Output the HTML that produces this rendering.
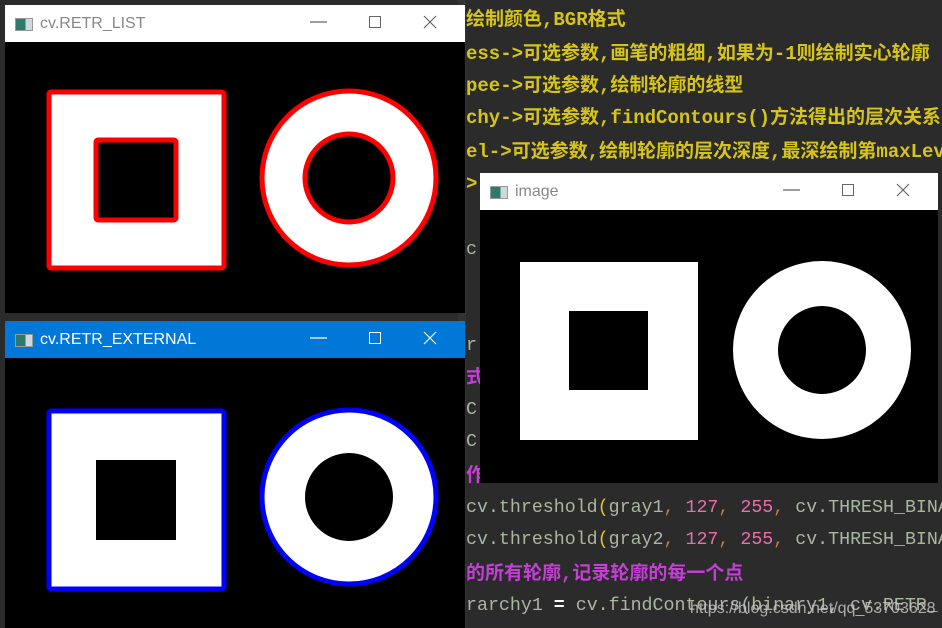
<!DOCTYPE html>
<html><head><meta charset="utf-8"><style>
*{margin:0;padding:0;box-sizing:border-box}
body{width:942px;height:628px;background:#2b2b2b;position:relative;overflow:hidden;font-family:"Liberation Mono","Noto Sans CJK SC",monospace}
.ln{position:absolute;left:466px;font-size:19px;line-height:20px;white-space:nowrap;font-weight:bold;color:#d6c41c}
.cd{position:absolute;left:466px;font-size:18.3px;line-height:20px;white-space:nowrap;color:#a9b7a0}
.win{position:absolute;background:#000;overflow:hidden}
.tb{position:absolute;left:0;right:0;top:0;height:37px;background:#fff;font-family:"Liberation Sans",sans-serif;font-size:16px;color:#888}
.tb .t{position:absolute;left:35px;top:10px}
.ic{position:absolute;left:10px;top:13px;width:18px;height:13px;background:linear-gradient(90deg,#2e7a6a 0 60%,#cfd8dc 60%);border:1px solid #999}
.tb svg{position:absolute;top:0;right:0}
</style></head><body>
<div style="position:absolute;left:458px;top:0;width:8px;height:628px;background:#313335"></div>
<div class="ln" style="top:10px">绘制颜色,BGR格式</div>
<div class="ln" style="top:44px">ess->可选参数,画笔的粗细,如果为-1则绘制实心轮廓</div>
<div class="ln" style="top:76px">pee->可选参数,绘制轮廓的线型</div>
<div class="ln" style="top:108px">chy->可选参数,findContours()方法得出的层次关系</div>
<div class="ln" style="top:142px">el->可选参数,绘制轮廓的层次深度,最深绘制第maxLevel</div>
<div class="ln" style="top:174px">&gt;</div>
<div class="cd" style="top:240px">c</div>
<div class="cd" style="top:336px">r</div>
<div class="ln" style="top:368px;color:#c33fd6">式</div>
<div class="cd" style="top:400px">C</div>
<div class="cd" style="top:432px">C</div>
<div class="ln" style="top:466px;color:#c33fd6">作</div>
<div class="cd" style="top:498px">cv.threshold<span style="color:#e8bf3a">(</span>gray1<span style="color:#cc7832">,</span> <span style="color:#e86fa8">127</span><span style="color:#cc7832">,</span> <span style="color:#e86fa8">255</span><span style="color:#cc7832">,</span> cv.THRESH_BINARY</div>
<div class="cd" style="top:530px">cv.threshold<span style="color:#e8bf3a">(</span>gray2<span style="color:#cc7832">,</span> <span style="color:#e86fa8">127</span><span style="color:#cc7832">,</span> <span style="color:#e86fa8">255</span><span style="color:#cc7832">,</span> cv.THRESH_BINARY</div>
<div class="ln" style="top:564px;color:#c33fd6">的所有轮廓,记录轮廓的每一个点</div>
<div class="cd" style="top:596px">rarchy1 <b style="color:#fff">=</b> cv.findContours(binary1, cv.RETR_</div>
<div style="position:absolute;left:690px;top:600px;font-family:'Liberation Sans',sans-serif;font-size:16px;color:#ccc;opacity:.8">https://blog.csdn.net/qq_53703628</div>

<div class="win" style="left:5px;top:5px;width:460px;height:308px">
<div class="tb"><div class="ic"></div><div class="t">cv.RETR_LIST</div>
<svg width="160" height="37"><path d="M5 17H22" stroke="#666" stroke-width="1.2"/><rect x="64.5" y="11.5" width="11" height="11" fill="none" stroke="#666"/><path d="M119 11L131 23M131 11L119 23" stroke="#666" stroke-width="1.2"/></svg></div>
<svg style="position:absolute;top:37px;left:0" width="460" height="271">
<rect x="44" y="50" width="175" height="176" fill="#fff" stroke="red" stroke-width="5" rx="2"/>
<rect x="91" y="98" width="80" height="80" fill="#000" stroke="red" stroke-width="5" rx="2"/>
<circle cx="344" cy="136" r="87" fill="#fff" stroke="red" stroke-width="5"/>
<circle cx="344" cy="136" r="44" fill="#000" stroke="red" stroke-width="5"/>
</svg></div>

<div class="win" style="left:5px;top:321px;width:460px;height:307px">
<div class="tb" style="background:#0078d7;color:#fff"><div class="ic"></div><div class="t">cv.RETR_EXTERNAL</div>
<svg width="160" height="37"><path d="M5 17H22" stroke="#fff" stroke-width="1.2"/><rect x="64.5" y="11.5" width="11" height="11" fill="none" stroke="#fff"/><path d="M119 11L131 23M131 11L119 23" stroke="#fff" stroke-width="1.2"/></svg></div>
<svg style="position:absolute;top:37px;left:0" width="460" height="270">
<rect x="44" y="53" width="175" height="178" fill="#fff" stroke="blue" stroke-width="5" rx="2"/>
<rect x="91" y="102" width="80" height="80" fill="#000"/>
<circle cx="344" cy="139" r="87" fill="#fff" stroke="blue" stroke-width="5"/>
<circle cx="344" cy="139" r="44" fill="#000"/>
</svg></div>

<div class="win" style="left:480px;top:173px;width:458px;height:310px">
<div class="tb"><div class="ic"></div><div class="t">image</div>
<svg width="160" height="37"><path d="M5 17H22" stroke="#666" stroke-width="1.2"/><rect x="64.5" y="11.5" width="11" height="11" fill="none" stroke="#666"/><path d="M119 11L131 23M131 11L119 23" stroke="#666" stroke-width="1.2"/></svg></div>
<svg style="position:absolute;top:37px;left:0" width="458" height="273">
<rect x="40" y="52" width="178" height="178" fill="#fff"/>
<rect x="89" y="101" width="79" height="79" fill="#000"/>
<circle cx="342" cy="140" r="89" fill="#fff"/>
<circle cx="342" cy="140" r="44" fill="#000"/>
</svg></div>
</body></html>
